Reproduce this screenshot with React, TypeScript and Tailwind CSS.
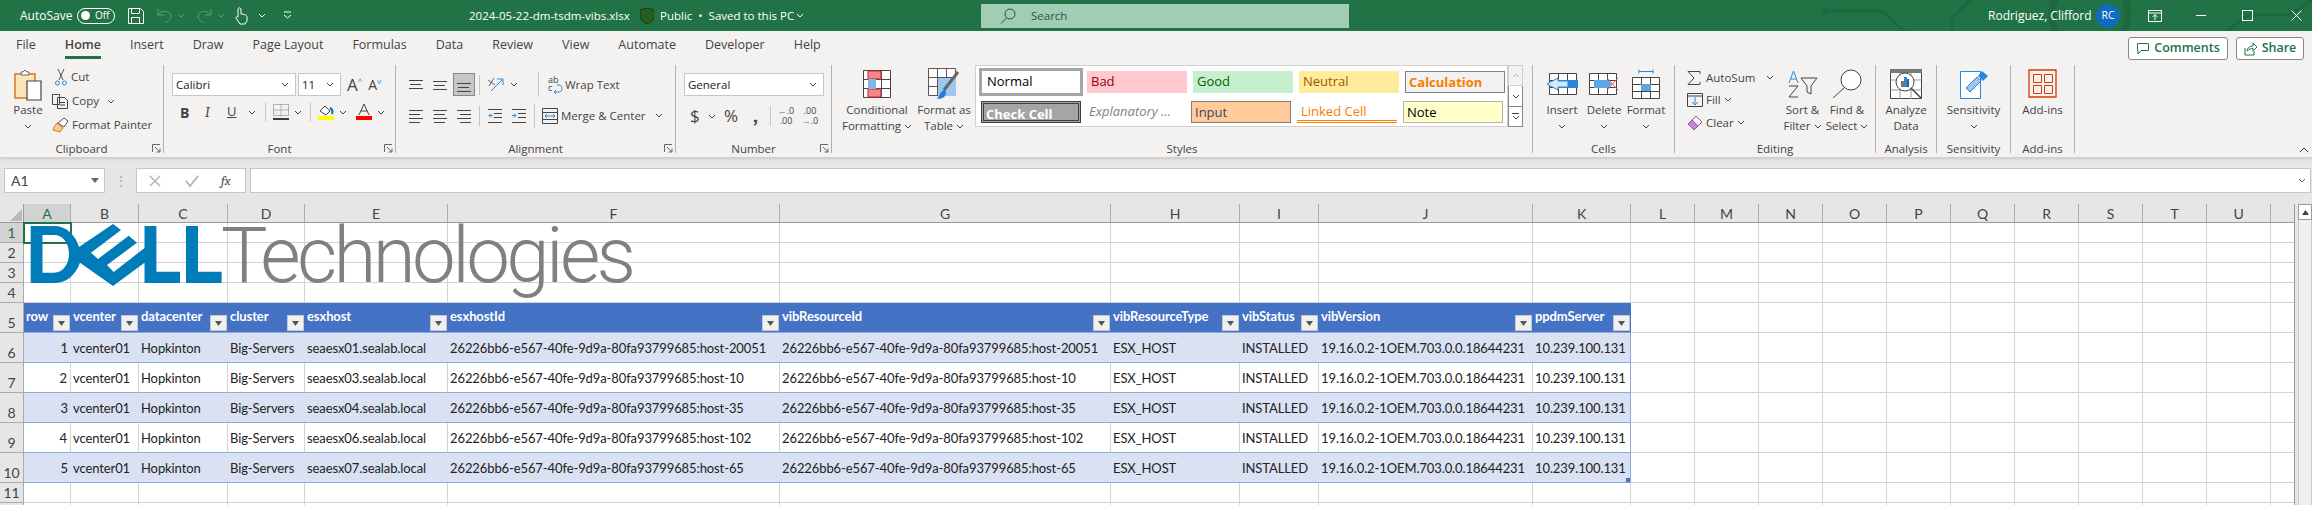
import React from 'react';

const Chev = ({ className = 'text-[#444]' }: { className?: string }) => (
  <svg width="8" height="5" viewBox="0 0 8 5" className={`shrink-0 ${className}`}>
    <path d="M1 1l3 3 3-3" fill="none" stroke="currentColor" strokeWidth="1" />
  </svg>
);

const Launcher = () => (
  <svg width="9" height="9" viewBox="0 0 9 9" className="absolute right-[2px] bottom-[0px]">
    <path d="M.5 8V.5H8M3 3l5 5M8 4.5V8H4.5" fill="none" stroke="#666" strokeWidth="1" />
  </svg>
);

const Lines = ({ rows, w = 14, h = 14 }: { rows: [number, number][]; w?: number; h?: number }) => (
  <svg width={w} height={h} viewBox={`0 0 ${w} ${h}`} className="shrink-0">
    {rows.map(([y, x], i) => (
      <path key={i} d={`M${x} ${y}.5H${x + (i % 2 ? w - 3 : w)}`} stroke="#444" strokeWidth="1" />
    ))}
  </svg>
);

const Group = ({
  w,
  label,
  launcher,
  children,
}: {
  w: string;
  label: string;
  launcher?: boolean;
  children: React.ReactNode;
}) => (
  <div className={`relative flex h-[88px] shrink-0 flex-col border-r border-[#b3b0ad] ${w}`}>
    <div className="h-[76px]">{children}</div>
    <div className="h-[12px] text-center text-[11.500px] leading-[16px] text-[#444]">{label}</div>
    {launcher && <Launcher />}
  </div>
);

const BigButton = ({
  w,
  icon,
  lines,
  chevLine,
}: {
  w: string;
  icon: React.ReactNode;
  lines: string[];
  chevLine?: number;
}) => (
  <div className={`flex shrink-0 flex-col items-center ${w}`}>
    <div className="flex h-[37px] items-center justify-center">{icon}</div>
    {lines.map((l, i) => (
      <div key={i} className="flex h-[16px] items-center gap-[3px] text-[11.500px] leading-[16px] whitespace-nowrap text-[#444]">
        {l}
        {chevLine === i && <Chev />}
      </div>
    ))}
    {chevLine === lines.length && (
      <div className="flex h-[16px] items-center">
        <Chev />
      </div>
    )}
  </div>
);

const Sep = ({ className = 'h-[20px]' }: { className?: string }) => (
  <div className={`w-px shrink-0 bg-[#c8c6c4] ${className}`} />
);

const Tbl = ({ children, w = 30, h = 28 }: { children?: React.ReactNode; w?: number; h?: number }) => (
  <svg width={w} height={h} viewBox={`0 0 ${w} ${h}`} className="shrink-0">
    {children}
  </svg>
);

const styleCells = [
  { t: 'Normal', c: 'ml-[3px] w-[104px] h-[28px] -mt-[3px] border-[3px] border-[#a6a6a6] bg-white text-black pl-[5px]' },
  { t: 'Bad', c: 'ml-[4px] w-[100px] h-[22px] bg-[#ffc7ce] text-[#9c0006] pl-[4px]' },
  { t: 'Good', c: 'ml-[6px] w-[100px] h-[22px] bg-[#c6efce] text-[#006100] pl-[4px]' },
  { t: 'Neutral', c: 'ml-[6px] w-[100px] h-[22px] bg-[#ffeb9c] text-[#9c5700] pl-[4px]' },
  { t: 'Calculation', c: 'ml-[6px] w-[100px] h-[22px] border border-[#7f7f7f] bg-[#f2f2f2] text-[#fa7d00] font-bold pl-[3px]' },
];
const styleCells2 = [
  { t: 'Check Cell', c: 'ml-[5px] w-[100px] h-[22px] border-[3px] border-double border-[#3f3f3f] bg-[#a5a5a5] text-white font-bold pl-[2px]' },
  { t: 'Explanatory ...', c: 'ml-[4px] w-[100px] h-[22px] text-[#7f7f7f] italic pl-[4px]' },
  { t: 'Input', c: 'ml-[6px] w-[100px] h-[22px] border border-[#7f7f7f] bg-[#ffcc99] text-[#3f3f76] pl-[3px]' },
  { t: 'Linked Cell', c: 'ml-[6px] w-[100px] h-[22px] border-b-[3px] border-double border-[#ff8001] text-[#fa7d00] pl-[4px]' },
  { t: 'Note', c: 'ml-[6px] w-[100px] h-[22px] border border-[#b2b2b2] bg-[#ffffcc] text-black pl-[3px]' },
];

const TitleBar = () => (
  <div className="relative flex h-[31px] items-center overflow-hidden bg-[#217346] text-[12px] text-white">
    <svg width="490" height="31" viewBox="0 0 490 31" className="absolute top-0 right-0" fill="none" stroke="#1d683f" strokeWidth="3">
      <circle cx="268" cy="14" r="38" strokeWidth="7" />
      <path d="M0 11H60l22 20M405 31l22-16h40l23-15M130 31V18l18-18" />
      <circle cx="2" cy="11" r="3" />
    </svg>
    <span className="ml-[20px] w-[57px] shrink-0">AutoSave</span>
    <div className="flex h-[16px] w-[38px] shrink-0 items-center rounded-full border border-white pl-[3px] text-[10px]">
      <div className="h-[9px] w-[9px] rounded-full bg-white" />
      <span className="ml-[5px]">Off</span>
    </div>
    <svg width="16" height="16" viewBox="0 0 16 16" fill="none" stroke="white" className="ml-[13px] shrink-0">
      <path d="M.5.500h12l3 3v12H.5zM3.500.5v5h8v-5M3.500 15.500v-6h8v6" />
    </svg>
    <svg width="15" height="15" viewBox="0 0 15 15" fill="none" stroke="#5f9c7d" className="ml-[13px] shrink-0">
      <path d="M1 1v6h6M1 7c3-5 12-5 13 1 0 3-2 5-6 7" />
    </svg>
    <Chev className="ml-[5px] text-[#5f9c7d]" />
    <svg width="15" height="15" viewBox="0 0 15 15" fill="none" stroke="#5f9c7d" className="ml-[12px] shrink-0">
      <path d="M14 1v6H8M14 7C11 2 2 2 1 8c0 3 2 5 6 7" />
    </svg>
    <Chev className="ml-[5px] text-[#5f9c7d]" />
    <svg width="13" height="18" viewBox="0 0 13 18" fill="none" stroke="white" className="ml-[10px] shrink-0">
      <path d="M3 10V3c0-3 3-3 3 0v4c3 0 6 1 6 3v4l-2 3H5l-4-6c0-1 1-2 2-1" />
    </svg>
    <Chev className="ml-[10px] text-white" />
    <svg width="9" height="9" viewBox="0 0 9 9" fill="none" stroke="white" className="ml-[17px] shrink-0">
      <path d="M1 1h7M1 4l3.500 3L8 4" />
    </svg>
    <span className="ml-[177px] w-[171px] shrink-0 whitespace-nowrap text-[11.500px]">2024-05-22-dm-tsdm-vibs.xlsx</span>
    <svg width="14" height="16" viewBox="0 0 14 16" className="shrink-0">
      <path d="M7 0l7 2v6c0 4-3 6-7 8-4-2-7-4-7-8V2z" fill="#2a5e1e" stroke="#16381a" />
    </svg>
    <span className="ml-[6px] w-[132px] shrink-0 whitespace-nowrap text-[11.500px]">Public&nbsp;&nbsp;•&nbsp;&nbsp;Saved to this PC</span>
    <Chev className="ml-[4px] text-white" />
    <div className="ml-[177px] flex h-[24px] w-[368px] shrink-0 items-center bg-[#a0cdb4] pl-[19px] text-[11.500px] text-[#1e5c3a]">
      <svg width="16" height="16" viewBox="0 0 16 16" fill="none" stroke="#1e5c3a">
        <circle cx="10" cy="6" r="5" />
        <path d="M6.500 10L1 15.500" />
      </svg>
      <span className="ml-[15px]">Search</span>
    </div>
    <span className="relative ml-[639px] w-[108px] shrink-0 whitespace-nowrap text-[12px]">Rodriguez, Clifford</span>
    <div className="relative flex h-[24px] w-[24px] shrink-0 items-center justify-center rounded-full bg-[#0f6cbd] text-[10.500px]">RC</div>
    <svg width="14" height="12" viewBox="0 0 14 12" fill="none" stroke="white" className="relative ml-[28px] shrink-0">
      <path d="M.5.500h13v11H.5zM.5 3h13M7 10V5M4.500 7L7 4.500 9.500 7" />
    </svg>
    <div className="relative ml-[34px] h-px w-[10px] shrink-0 bg-white" />
    <div className="relative ml-[36px] h-[11px] w-[11px] shrink-0 border border-white" />
    <svg width="11" height="11" viewBox="0 0 11 11" stroke="white" className="relative ml-[38px] shrink-0">
      <path d="M.5.500l10 10M10.500.500l-10 10" />
    </svg>
  </div>
);

const Tabs = () => (
  <div className="relative flex h-[29px] items-center gap-[29px] pl-[16px] text-[12.500px] text-[#444]">
    {['File', 'Home', 'Insert', 'Draw', 'Page Layout', 'Formulas', 'Data', 'Review', 'View', 'Automate', 'Developer', 'Help'].map(t =>
      t === 'Home' ? (
        <span key={t} className="relative font-semibold">
          {t}
          <span className="absolute -bottom-[4px] left-0 h-[3px] w-full bg-[#217346]" />
        </span>
      ) : (
        <span key={t}>{t}</span>
      ),
    )}
    <div className="ml-auto flex gap-[8px] pt-[6px] pr-[8px] text-[12.500px] font-semibold text-[#217346]">
      <div className="flex h-[23px] w-[100px] items-center justify-center gap-[4px] rounded-[3px] border border-[#8a8886] bg-white">
        <svg width="14" height="12" viewBox="0 0 14 12" fill="none" stroke="#217346">
          <path d="M1.500.500h11v7H5L2 11V7.500h-.500z" />
        </svg>
        Comments
      </div>
      <div className="flex h-[23px] w-[68px] items-center justify-center gap-[4px] rounded-[3px] border border-[#8a8886] bg-white">
        <svg width="14" height="14" viewBox="0 0 14 14" fill="none" stroke="#217346">
          <path d="M1 6v7h9V9M3 9c0-3 3-5 6-5V1l4 4-4 4V6.500C7 6.500 5 7 3 9z" />
        </svg>
        Share
      </div>
    </div>
  </div>
);

const Ribbon = () => (
  <div className="relative flex h-[97px] items-start bg-[#f3f2f1] pt-[5px] shadow-[0_2px_3px_rgba(0,0,0,0.12)]">
    <Group w="w-[164px]" label="Clipboard" launcher>
      <div className="flex">
        <BigButton
          w="w-[52px] pl-[4px]"
          lines={['Paste']}
          chevLine={1}
          icon={
            <svg width="29" height="33" viewBox="0 0 29 33" className="mt-[3px]">
              <path d="M1 5h20v24H1z" fill="#fce4b8" stroke="#d67b1a" strokeWidth="1.500" />
              <path d="M7 6V3h2l2-2 2 2h2v3z" fill="#fff" stroke="#666" />
              <path d="M13 12h14v19H13z" fill="#fff" stroke="#444" strokeWidth="1.200" />
            </svg>
          }
        />
        <div className="flex flex-col text-[11.500px] text-[#444]">
          <div className="flex h-[24px] items-center">
            <svg width="12" height="17" viewBox="0 0 12 17" fill="none" className="ml-[3px]">
              <path d="M3 0l5 11M9 0L4 11" stroke="#555" />
              <circle cx="2.500" cy="14" r="2" stroke="#2b88d8" />
              <circle cx="9.500" cy="14" r="2" stroke="#2b88d8" />
            </svg>
            <span className="ml-[4px]">Cut</span>
          </div>
          <div className="flex h-[24px] items-center">
            <svg width="17" height="16" viewBox="0 0 17 16" fill="none" stroke="#444">
              <path d="M.5 1.500h7v10H.5zM5.500 4.500h7l3 3v8h-10zM8 9.500h5M8 12h5" fill="#f3f2f1" />
            </svg>
            <span className="ml-[3px]">Copy</span>
            <Chev className="ml-[8px] text-[#444]" />
          </div>
          <div className="flex h-[24px] items-center">
            <svg width="18" height="16" viewBox="0 0 18 16" fill="none">
              <path d="M5 6l6 5-3 4-7-2 1-3z" fill="#f7c98d" stroke="#d67b1a" />
              <path d="M6 6l6-5 4 3-4 6z" fill="#fff" stroke="#555" />
            </svg>
            <span className="ml-[2px] whitespace-nowrap">Format Painter</span>
          </div>
        </div>
      </div>
    </Group>

    <Group w="w-[232px]" label="Font" launcher>
      <div className="flex items-center pt-[8px] pl-[8px] text-[11.500px] text-[#222]">
        <div className="flex h-[23px] w-[124px] items-center justify-between border border-[#c8c6c4] bg-white pr-[6px] pl-[3px]">
          Calibri
          <Chev />
        </div>
        <div className="ml-[2px] flex h-[23px] w-[43px] items-center justify-between border border-[#c8c6c4] bg-white pr-[6px] pl-[3px]">
          11
          <Chev />
        </div>
        <span className="ml-[6px] text-[17px] leading-none text-[#444]">A</span>
        <span className="-mt-[8px] text-[8px] text-[#2b88d8]">^</span>
        <span className="ml-[6px] text-[14px] leading-none text-[#444]">A</span>
        <span className="-mt-[8px] text-[8px] text-[#2b88d8]">v</span>
      </div>
      <div className="flex h-[24px] items-center pt-[8px] text-[#444]">
        <span className="ml-[16px] w-[25px] text-[14px] font-bold">B</span>
        <span className="w-[22px] font-serif text-[14px] italic">I</span>
        <span className="w-[21px] text-[13px] underline">U</span>
        <Chev />
        <Sep className="ml-[9px] h-[20px]" />
        <svg width="16" height="16" viewBox="0 0 16 16" fill="none" className="ml-[7px]">
          <path d="M.5.500h15v11H.5zM8 .5v11M.5 6h15" stroke="#777" strokeDasharray="1 1" />
          <path d="M0 15h16" stroke="#000" strokeWidth="1.500" />
        </svg>
        <Chev className="ml-[5px]" />
        <Sep className="ml-[8px] h-[20px]" />
        <svg width="16" height="16" viewBox="0 0 16 16" className="ml-[7px]">
          <path d="M2 7l5-5 5 5-4 4z" fill="#fff" stroke="#444" />
          <path d="M12 4c2 1 3 3 2 6" fill="none" stroke="#0f6cbd" strokeWidth="2" />
          <path d="M0 12h16v4H0z" fill="#ffff00" />
        </svg>
        <Chev className="ml-[5px]" />
        <svg width="16" height="16" viewBox="0 0 16 16" className="ml-[9px]">
          <path d="M3 11L8 0l5 11M5 7h6" fill="none" stroke="#444" />
          <path d="M0 12h16v4H0z" fill="#ff0000" />
        </svg>
        <Chev className="ml-[5px]" />
      </div>
    </Group>

    <Group w="w-[280px]" label="Alignment" launcher>
      <div className="flex h-[31px] items-center pt-[8px] pl-[13px] text-[11.500px] text-[#444]">
        <Lines rows={[[0, 0], [4, 1], [8, 0]]} h={10} />
        <div className="ml-[10px]"><Lines rows={[[2, 0], [6, 1], [10, 0]]} h={12} /></div>
        <div className="ml-[6px] flex h-[23px] w-[22px] items-center justify-center border border-[#8a8886] bg-[#c8c6c4] pt-[6px]">
          <Lines rows={[[0, 0], [4, 1], [8, 0]]} h={10} />
        </div>
        <Sep className="ml-[4px] h-[20px]" />
        <svg width="17" height="15" viewBox="0 0 17 15" fill="none" className="ml-[7px]">
          <path d="M2 9l5-8M1 3l7 5" stroke="#666" />
          <path d="M4 14L15 3M10 2h6v6" stroke="#2b88d8" />
        </svg>
        <Chev className="ml-[6px]" />
        <Sep className="ml-[20px] h-[25px]" />
        <div className="relative ml-[9px] h-[18px] w-[15px] shrink-0 text-[9px] leading-[8px] text-[#444]">
          ab
          <br />c
          <svg width="15" height="18" viewBox="0 0 15 18" fill="none" className="absolute top-0 left-0">
            <path d="M7 16h4c4 0 4-7 0-7H9M8 14l-2 2 2 2" stroke="#2b88d8" />
          </svg>
        </div>
        <span className="ml-[2px] whitespace-nowrap">Wrap Text</span>
      </div>
      <div className="flex h-[33px] items-center pt-[6px] pl-[13px] text-[11.500px] text-[#444]">
        <Lines rows={[[1, 0], [5, 0], [9, 0], [13, 0]]} />
        <div className="ml-[10px]"><Lines rows={[[1, 0], [5, 1], [9, 0], [13, 1]]} /></div>
        <div className="ml-[10px]"><Lines rows={[[1, 0], [5, 3], [9, 0], [13, 3]]} /></div>
        <Sep className="ml-[8px] h-[20px]" />
        <svg width="14" height="14" viewBox="0 0 14 14" fill="none" className="ml-[8px]">
          <path d="M0 .5h14M6 4.500h8M6 8.500h8M0 13.500h14" stroke="#444" />
          <path d="M1 6.500h4M3 4.500l-2 2 2 2" stroke="#2b88d8" />
        </svg>
        <svg width="14" height="14" viewBox="0 0 14 14" fill="none" className="ml-[10px]">
          <path d="M0 .5h14M6 4.500h8M6 8.500h8M0 13.500h14" stroke="#444" />
          <path d="M0 6.500h4M2 4.500l2 2-2 2" stroke="#2b88d8" />
        </svg>
        <Sep className="ml-[8px] h-[24px]" />
        <svg width="16" height="16" viewBox="0 0 16 16" fill="none" className="ml-[7px]">
          <path d="M.5.500h15v15H.5zM.5 4.500h15M.5 11.500h15" stroke="#444" />
          <path d="M3 8h10M5 6L3 8l2 2M11 6l2 2-2 2" stroke="#2b88d8" />
        </svg>
        <span className="ml-[3px] whitespace-nowrap">Merge &amp; Center</span>
        <Chev className="ml-[9px]" />
      </div>
    </Group>

    <Group w="w-[156px]" label="Number" launcher>
      <div className="pt-[8px] pl-[8px] text-[11.500px] text-[#222]">
        <div className="flex h-[23px] w-[140px] items-center justify-between border border-[#c8c6c4] bg-white pr-[6px] pl-[3px]">
          General
          <Chev />
        </div>
      </div>
      <div className="flex h-[33px] items-center pt-[7px] pl-[14px] text-[#444]">
        <span className="w-[16px] text-[17px]">$</span>
        <Chev className="ml-[2px]" />
        <span className="ml-[8px] w-[22px] text-[17px]">%</span>
        <span className="ml-[7px] w-[11px] font-serif text-[22px] leading-none font-bold">,</span>
        <Sep className="ml-[6px] h-[20px]" />
        <span className="ml-[6px] w-[18px] text-center text-[9px] leading-[10px] text-[#444]">
          <span className="text-[#2b88d8]">←</span>.0
          <br />
          .00
        </span>
        <span className="ml-[6px] w-[18px] text-center text-[9px] leading-[10px] text-[#444]">
          .00
          <br />
          <span className="text-[#2b88d8]">→</span>.0
        </span>
      </div>
    </Group>

    <Group w="w-[701px]" label="Styles">
      <div className="flex">
        <BigButton
          w="w-[72px] ml-[9px]"
          lines={['Conditional', 'Formatting']}
          chevLine={1}
          icon={
            <Tbl w={28} h={28}>
              <path d="M.5.500h27v27H.5zM9.500.5v27M18.500.5v27M.5 9.500h27M.5 18.500h27" fill="#fff" stroke="#444" />
              <path d="M5 1h13v8H5zM5 19h13v8H5z" fill="#f4868c" stroke="#c8262e" />
              <path d="M5 9h8v10H5z" fill="#7db7e8" />
            </Tbl>
          }
        />
        <BigButton
          w="w-[60px] ml-[1px]"
          lines={['Format as', 'Table']}
          chevLine={1}
          icon={
            <Tbl w={32} h={32}>
              <path d="M.5.500h27v27H.5zM9.500.5v27M18.500.5v27M.5 9.500h27M.5 18.500h27" fill="#fff" stroke="#555" />
              <path d="M10 10h18v18H10z" fill="#9cc8ee" />
              <path d="M30 4L16 22" stroke="#666" strokeWidth="3" />
              <path d="M17 21l-4 3-4 7c6 0 9-3 9-6z" fill="#2b7cd3" />
            </Tbl>
          }
        />
        <div className="ml-[1px] flex h-[62px] w-[533px] flex-col border border-[#d2d0ce] bg-white text-[13px] leading-[20px]">
          <div className="flex pt-[5px]">
            {styleCells.map(s => (
              <div key={s.t} className={`shrink-0 ${s.c}`}>{s.t}</div>
            ))}
          </div>
          <div className="flex pt-[5px]">
            {styleCells2.map(s => (
              <div key={s.t} className={`shrink-0 ${s.c}`}>{s.t}</div>
            ))}
          </div>
        </div>
        <div className="flex h-[62px] w-[15px] flex-col">
          <div className="flex h-[21px] items-center justify-center border border-[#d2d0ce] bg-[#f3f2f1]"><Chev className="rotate-180 text-[#bbb]" /></div>
          <div className="flex h-[20px] items-center justify-center border-x border-[#8a8886] bg-white"><Chev /></div>
          <div className="flex h-[21px] flex-col items-center justify-center gap-px border border-[#8a8886] bg-white">
            <div className="h-px w-[7px] bg-[#444]" />
            <Chev />
          </div>
        </div>
      </div>
    </Group>

    <Group w="w-[142px]" label="Cells">
      <div className="flex pl-[8px]">
        <BigButton
          w="w-[42px]"
          lines={['Insert']}
          chevLine={1}
          icon={
            <Tbl w={32} h={24}>
              <path d="M3.500 1.500h27v21h-27zM12.500 1.500v21M21.500 1.500v21M3.500 8.500h27M3.500 15.500h27" fill="#fff" stroke="#444" />
              <path d="M10 8h22v8H10z" fill="#2b88d8" />
              <path d="M12 6L1 12l11 6v-3h10V9H12z" fill="#d6e9f8" stroke="#2b88d8" />
            </Tbl>
          }
        />
        <BigButton
          w="w-[42px]"
          lines={['Delete']}
          chevLine={1}
          icon={
            <Tbl w={30} h={24}>
              <path d="M.5 1.500h27v21H.5zM9.500 1.500v21M18.500 1.500v21M.5 8.500h27M.5 15.500h27" fill="#fff" stroke="#444" />
              <path d="M5 8h14v8H5zM19 8l4 4-4 4z" fill="#5ba7e6" />
              <path d="M18 6l11 12M29 6L18 18" stroke="#e8534c" />
            </Tbl>
          }
        />
        <BigButton
          w="w-[42px]"
          lines={['Format']}
          chevLine={1}
          icon={
            <Tbl w={28} h={30}>
              <path d="M7 2.500h14M7 .5v4M21 .5v4" stroke="#2b88d8" />
              <path d="M.5 8.500h27v21H.5zM9.500 8.500v21M18.500 8.500v21M.5 15.500h27M.5 22.500h27" fill="#fff" stroke="#444" />
              <path d="M9 15h10v7H9z" fill="#5ba7e6" />
            </Tbl>
          }
        />
      </div>
    </Group>

    <Group w="w-[201px]" label="Editing">
      <div className="flex">
        <div className="flex w-[108px] shrink-0 flex-col pl-[12px] text-[11.500px] text-[#444]">
          <div className="flex h-[23px] items-center pt-[2px]">
            <svg width="14" height="14" viewBox="0 0 14 14" fill="none" stroke="#444" className="mr-[5px]">
              <path d="M13 3V.5H1L7 7l-6 6.500h12V11" />
            </svg>
            <span className="whitespace-nowrap">AutoSum</span>
            <Chev className="ml-[11px]" />
          </div>
          <div className="flex h-[23px] items-center">
            <svg width="16" height="14" viewBox="0 0 16 14" fill="none">
              <path d="M.5.500h15v13H.5zM.5 3h15" stroke="#444" />
              <path d="M8 4v8M5 9l3 3 3-3" stroke="#2b88d8" />
            </svg>
            <span className="ml-[3px]">Fill</span>
            <Chev className="ml-[3px]" />
          </div>
          <div className="flex h-[23px] items-center">
            <svg width="16" height="16" viewBox="0 0 16 16" fill="#f3f2f1">
              <path d="M1 9l8-8 6 6-8 8z" stroke="#a34ab5" />
              <path d="M1 9l4-4 6 6-4 4z" fill="#c58ad1" stroke="#a34ab5" />
            </svg>
            <span className="ml-[3px]">Clear</span>
            <Chev className="ml-[3px]" />
          </div>
        </div>
        <BigButton
          w="w-[45px] -ml-[3px]"
          lines={['Sort &', 'Filter']}
          chevLine={1}
          icon={
            <Tbl w={30} h={28}>
              <path d="M1 13L5.500 1 10 13M2.500 9h6" fill="none" stroke="#2b88d8" />
              <path d="M1 16h9L1 27h9M13 8h16l-6 8v8l-4-2v-6z" fill="none" stroke="#444" />
            </Tbl>
          }
        />
        <BigButton
          w="w-[42px] ml-[1px]"
          lines={['Find &', 'Select']}
          chevLine={1}
          icon={
            <Tbl w={30} h={30}>
              <circle cx="19" cy="11" r="10" fill="#fff" stroke="#444" />
              <path d="M12 19L1 29" stroke="#444" />
            </Tbl>
          }
        />
      </div>
    </Group>

    <Group w="w-[61px]" label="Analysis">
      <BigButton
        w="w-[60px]"
        lines={['Analyze', 'Data']}
        icon={
          <Tbl w={32} h={32}>
            <path d="M.5 1.500h31v29H.5z" fill="#fff" stroke="#444" />
            <path d="M0 1h32v4H0z" fill="#777" />
            <path d="M.5 12h31M.5 22h31M10 5v26M21 5v26" stroke="#999" />
            <circle cx="15" cy="14" r="9" fill="#fff" stroke="#444" />
            <path d="M21 20l10 10" stroke="#444" strokeWidth="1.500" />
            <path d="M11 13h3v6h-3z" fill="#777" />
            <path d="M14 9h3v10h-3z" fill="#2b88d8" />
            <path d="M17 11h2v8h-2z" fill="#555" />
          </Tbl>
        }
      />
    </Group>

    <Group w="w-[74px]" label="Sensitivity">
      <BigButton
        w="w-[73px]"
        lines={['Sensitivity']}
        chevLine={1}
        icon={
          <Tbl w={30} h={30}>
            <path d="M1.500 2.500h20v27h-20z" fill="#fff" stroke="#2b88d8" />
            <path d="M7 19L18 8l4 4-11 11z" fill="#9cc8ee" stroke="#2b7cd3" />
            <path d="M19 7l4-5 6 5-5 5z" fill="#2b88d8" />
          </Tbl>
        }
      />
    </Group>

    <Group w="w-[64px]" label="Add-ins">
      <BigButton
        w="w-[63px]"
        lines={['Add-ins']}
        icon={
          <Tbl w={29} h={29}>
            <path d="M1 1h27v27H1z" fill="none" stroke="#d83b01" strokeWidth="1.300" />
            <path d="M5.500 5.500h8v8h-8zM16.500 5.500h8v8h-8zM5.500 16.500h8v8h-8zM16.500 16.500h8v8h-8z" fill="none" stroke="#d83b01" />
          </Tbl>
        }
      />
    </Group>
    <svg width="10" height="6" viewBox="0 0 10 6" fill="none" stroke="#444" className="absolute right-[3px] bottom-[4px]">
      <path d="M1 5l4-4 4 4" />
    </svg>
  </div>
);

const FormulaBar = () => (
  <div className="flex h-[47px] items-start bg-[#e6e6e6] pt-[11px] pl-[4px] text-[14px] text-[#444]">
    <div className="flex h-[25px] w-[101px] items-center justify-between border border-[#c8c6c4] bg-white pr-[5px] pl-[6px] font-['Lato',sans-serif]">
      A1
      <svg width="8" height="5" viewBox="0 0 8 5"><path d="M0 0h8L4 5z" fill="#666" /></svg>
    </div>
    <div className="flex h-[25px] w-[31px] items-center justify-center text-[#aaa]">⋮</div>
    <div className="flex h-[25px] w-[110px] items-center border border-[#c8c6c4] bg-white pl-[12px]">
      <svg width="12" height="12" viewBox="0 0 12 12" stroke="#b5b5b5" strokeWidth="1.500"><path d="M1 1l10 10M11 1L1 11" /></svg>
      <svg width="14" height="12" viewBox="0 0 14 12" fill="none" stroke="#b5b5b5" strokeWidth="2" className="ml-[24px]"><path d="M1 6l4 5 8-10" /></svg>
      <span className="ml-[22px] font-serif text-[13px] italic">fx</span>
    </div>
    <div className="ml-[4px] flex h-[25px] w-[2061px] items-center justify-end border border-[#c8c6c4] bg-white pr-[4px]">
      <Chev className="text-[#666]" />
    </div>
  </div>
);

const colLetters = ['A', 'B', 'C', 'D', 'E', 'F', 'G', 'H', 'I', 'J', 'K', 'L', 'M', 'N', 'O', 'P', 'Q', 'R', 'S', 'T', 'U', ''];
const headers = ['row', 'vcenter', 'datacenter', 'cluster', 'esxhost', 'esxhostId', 'vibResourceId', 'vibResourceType', 'vibStatus', 'vibVersion', 'ppdmServer'];
const hosts = [
  ['seaesx01', 'host-20051'],
  ['seaesx03', 'host-10'],
  ['seaesx04', 'host-35'],
  ['seaesx06', 'host-102'],
  ['seaesx07', 'host-65'],
];
const uuid = '26226bb6-e567-40fe-9d9a-80fa93799685';
const cols = 'grid-cols-[24px_47px_68px_89px_77px_143px_332px_331px_129px_79px_214px_98px_repeat(10,64px)_23px]';

const Sheet = () => (
  <div className="relative flex flex-1 overflow-hidden bg-[#e6e6e6] font-['Lato',sans-serif] text-[13px] tracking-[-0.1px] text-[#222]">
    <div className={`relative grid w-[2295px] shrink-0 content-start ${cols} auto-rows-min border-r border-[#9a9a9a]`}>
      <div className="flex h-[19px] items-end justify-end border-r border-b border-[#9a9a9a] pr-[1px] pb-[1px]">
        <svg width="12" height="12" viewBox="0 0 12 12"><path d="M12 0v12H0z" fill="#b9b9b9" /></svg>
      </div>
      {colLetters.map((c, i) => (
        <div
          key={i}
          className={`flex h-[19px] items-center justify-center border-r border-b text-[14px] ${
            i === 0 ? 'border-r-[#ababab] border-b-[#217346] bg-[#d2d2d2] text-[#217346]' : 'border-r-[#ababab] border-b-[#9a9a9a] text-[#444]'
          } ${i === 21 ? 'border-r-0' : ''}`}
        >
          {c}
        </div>
      ))}

      {[1, 2, 3, 4].map(r => (
        <React.Fragment key={r}>
          <RowHead n={r} h="h-[20px]" active={r === 1} />
          {colLetters.map((_, i) => (
            <div key={i} className={`h-[20px] border-b border-[#d4d4d4] bg-white ${i < 21 ? 'border-r' : ''}`} />
          ))}
        </React.Fragment>
      ))}

      <RowHead n={5} h="h-[30px]" />
      {headers.map(h => (
        <div key={h} className="relative h-[30px] border-b border-[#8ea9db] bg-[#4472c4] pt-[4px] pl-[2px] font-bold whitespace-nowrap text-white">
          {h}
          <div className="absolute right-px bottom-px flex h-[16px] w-[17px] items-center justify-center border border-[#c8c8c8] bg-[#f0f0f0]">
            <svg width="7" height="5" viewBox="0 0 7 5"><path d="M0 0h7L3.500 5z" fill="#555" /></svg>
          </div>
        </div>
      ))}
      {colLetters.slice(11).map((_, i) => (
        <div key={i} className={`h-[30px] border-b border-[#d4d4d4] bg-white ${i < 10 ? 'border-r' : ''}`} />
      ))}

      {hosts.map(([host, id], r) => {
        const stripe = r % 2 === 0;
        const values = [String(r + 1), 'vcenter01', 'Hopkinton', 'Big-Servers', `${host}.sealab.local`, `${uuid}:${id}`, `${uuid}:${id}`, 'ESX_HOST', 'INSTALLED', '19.16.0.2-1OEM.703.0.0.18644231', '10.239.100.131'];
        return (
          <React.Fragment key={host}>
            <RowHead n={r + 6} h="h-[30px]" />
            {values.map((v, i) => (
              <div
                key={i}
                className={`relative flex h-[30px] items-center overflow-hidden border-b border-[#8ea9db] pt-[3px] whitespace-nowrap ${
                  i === 0 ? 'justify-end pr-[3px]' : 'pl-[2px]'
                } ${stripe ? 'bg-[#d9e1f2]' : 'bg-white'} ${!stripe && i < 10 ? 'border-r border-r-[#d4d4d4]' : ''} ${i === 10 ? 'border-r border-r-[#8ea9db]' : ''}`}
              >
                {v}
                {r === 4 && i === 10 && <span className="absolute right-0 bottom-0 h-[4px] w-[4px] bg-[#4472c4]" />}
              </div>
            ))}
            {colLetters.slice(11).map((_, i) => (
              <div key={i} className={`h-[30px] border-b border-[#d4d4d4] bg-white ${i < 10 ? 'border-r' : ''}`} />
            ))}
          </React.Fragment>
        );
      })}

      {[11, 12].map(r => (
        <React.Fragment key={r}>
          <RowHead n={r === 11 ? r : undefined} h="h-[20px]" />
          {colLetters.map((_, i) => (
            <div key={i} className={`h-[20px] border-b border-[#d4d4d4] bg-white ${i < 21 ? 'border-r' : ''}`} />
          ))}
        </React.Fragment>
      ))}

      <div className="absolute top-[18px] left-[23px] h-[22px] w-[49px] border-2 border-[#217346]" />
      <svg width="195" height="66" viewBox="30 222 195 66" className="absolute top-[18px] left-[30px]">
        <path
          fillRule="evenodd"
          fill="#007db8"
          d="M30.700 226H54C66 226 75 234 79 247L113 224L121 230L91 252.700L98 259L128.700 235.700L137 242.700L107 265L113.700 272L144.500 248V226H156.400V271.700H180V283H144.500V262.700L113 286L80 262.700C75 276 66 283 54 283H30.700ZM42.500 235V272.700H54C63 272.700 69 264 69 254C69 243 63 235 54 235ZM186 226H198V271.700H221.600V283H186Z"
        />
      </svg>
      <span className="absolute top-[19px] left-[221px] font-['Roboto',sans-serif] text-[78px] leading-[66px] font-light tracking-[-3.600px] text-[#808080]">
        Technologies
      </span>
    </div>
    <div className="ml-[3px] flex flex-1 flex-col pt-[0px]">
      <div className="flex h-[16px] items-center justify-center border border-[#9a9a9a] bg-white">
        <svg width="7" height="5" viewBox="0 0 7 5"><path d="M0 5h7L3.500 0z" fill="#444" /></svg>
      </div>
      <div className="flex-1 border-x border-[#c8c8c8] bg-[#f0f0f0]" />
    </div>
  </div>
);

function RowHead({ n, h, active }: { n?: number; h: string; active?: boolean }) {
  return (
    <div
      className={`flex items-end justify-center border-r border-b border-[#ababab] text-[14px] leading-[19px] ${h} ${
        active ? 'border-r-[#217346] bg-[#d2d2d2] text-[#217346]' : 'text-[#444]'
      }`}
    >
      {n}
    </div>
  );
}

export default function App() {
  return (
    <div className="flex h-[505px] w-[2312px] flex-col overflow-hidden bg-[#f3f2f1] font-['Open_Sans',sans-serif]">
      <TitleBar />
      <Tabs />
      <Ribbon />
      <FormulaBar />
      <Sheet />
    </div>
  );
}
